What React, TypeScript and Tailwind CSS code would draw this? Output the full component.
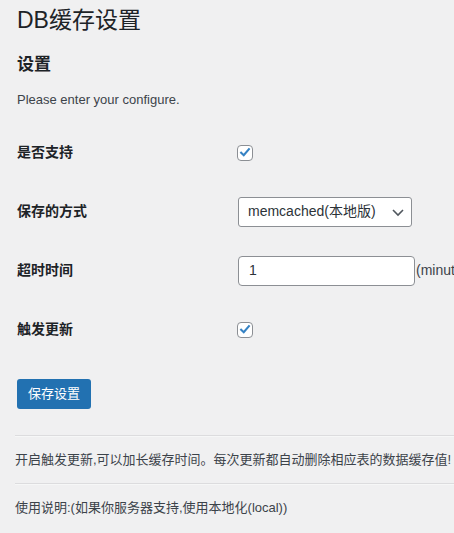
import React from "react";

function Check() {
  return (
    <span className="flex h-4 w-4 items-center justify-center rounded-[4px] border border-[#8c8f94] bg-white">
      <svg viewBox="0 0 20 20" className="h-[17px] w-[17px]">
        <path d="M4.5 10.2 L8.2 13.8 L15.6 5.2" fill="none" stroke="#3582c4" strokeWidth="3" strokeLinecap="square" strokeLinejoin="miter" />
      </svg>
    </span>
  );
}

function Row({ label, children }: { label: string; children: React.ReactNode }) {
  return (
    <div className="flex h-[59px] items-center">
      <div className="w-[220px] shrink-0 text-[14px] font-semibold text-[#1d2327]">{label}</div>
      <div className="flex items-center">{children}</div>
    </div>
  );
}

export default function App() {
  return (
    <div
      className="min-h-screen w-[454px] overflow-hidden bg-[#f0f0f1] text-[#3c434a]"
      style={{ fontFamily: '"Liberation Sans", "Noto Sans CJK SC", sans-serif' }}
    >
      <div className="pl-[17px]">
        <div className="flex h-[40px] items-center text-[23px] font-normal text-[#1d2327]">DB缓存设置</div>
        <div className="flex h-[50px] items-center text-[17px] font-semibold text-[#1d2327]">设置</div>
        <div className="flex h-[20px] items-center text-[13px]">Please enter your configure.</div>
        <div className="h-[13px]" />
        <Row label="是否支持">
          <Check />
        </Row>
        <Row label="保存的方式">
          <div className="ml-[1px] flex h-[30px] w-[174px] items-center justify-between rounded-[3px] border border-[#8c8f94] bg-white pl-[9px] pr-[3px] text-[14px] text-[#2c3338]">
            <span>memcached(本地版)</span>
            <svg viewBox="0 0 20 20" className="h-[20px] w-[20px]">
              <path d="M5 8 L10 13 L15 8" fill="none" stroke="#50575e" strokeWidth="1.6" />
            </svg>
          </div>
        </Row>
        <Row label="超时时间">
          <div className="ml-[1px] flex h-[30px] w-[177px] shrink-0 items-center rounded-[4px] border border-[#8c8f94] bg-white pl-[10px] text-[14px] text-[#2c3338]">
            1
          </div>
          <span className="whitespace-nowrap pl-[1px] text-[14px] text-[#3c434a]">(minutes)</span>
        </Row>
        <Row label="触发更新">
          <Check />
        </Row>
        <div className="h-[20px]" />
        <button className="flex h-[30px] w-[74px] items-center justify-center rounded-[3px] bg-[#2271b1] text-[13px] text-white">
          保存设置
        </button>
      </div>
      <div className="pl-[15px]">
        <div className="h-[26px]" />
        <div className="h-[2px] border-t border-[#dcdcde] bg-[#f6f7f7]" />
        <div className="flex h-[46px] items-center whitespace-nowrap text-[13px]">
          开启触发更新,可以加长缓存时间。每次更新都自动删除相应表的数据缓存值!
        </div>
        <div className="h-[2px] border-t border-[#dcdcde] bg-[#f6f7f7]" />
        <div className="flex h-[46px] items-center whitespace-nowrap text-[13px]">
          使用说明:(如果你服务器支持,使用本地化(local))
        </div>
      </div>
    </div>
  );
}
